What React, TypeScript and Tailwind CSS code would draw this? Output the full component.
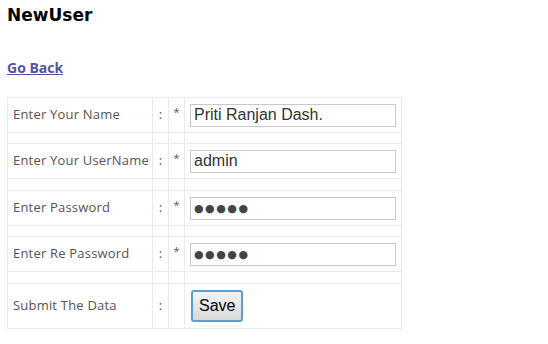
import React from 'react';

const rows = [
  { label: 'Enter Your Name', secret: false, value: 'Priti Ranjan Dash.', gap: 'h-[11px]' },
  { label: 'Enter Your UserName', secret: false, value: 'admin', gap: 'h-[12px]' },
  { label: 'Enter Password', secret: true, value: '●●●●●', gap: 'h-[11px]' },
  { label: 'Enter Re Password', secret: true, value: '●●●●●', gap: 'h-[12px]' },
];

const cell = 'border border-[#e6ebef] align-middle';

function Spacer({ h }: { h: string }) {
  return (
    <tr className={h}>
      <td className={cell} />
      <td className={cell} />
      <td className={cell} />
      <td className={cell} />
    </tr>
  );
}

export default function App() {
  return (
    <div className="bg-white w-[548px] h-[344px] px-[7px] pt-[3px] font-['DejaVu_Sans',sans-serif]">
      <h1 className="text-[17px] font-bold text-black leading-[24px]">NewUser</h1>
      <a
        href="#"
        className="block mt-[32px] w-fit text-[14px] font-bold text-[#5353a3] underline leading-[18px] font-['Open_Sans',sans-serif]"
      >
        Go Back
      </a>
      <table className="mt-[20px] border-collapse w-[395px] text-[13px] text-[#555] font-['Open_Sans',sans-serif]">
        <tbody>
          {rows.map((r) => (
            <React.Fragment key={r.label}>
              <tr className="h-[35px]">
                <td className={`${cell} w-[145px] pl-[5px] tracking-[0.2px]`}>{r.label}</td>
                <td className={`${cell} w-[16px] text-center`}>:</td>
                <td className={`${cell} w-[16px] text-center align-top pt-[6px] text-[11px]`}>*</td>
                <td className={`${cell} pl-[5px]`}>
                  <input
                    type="text"
                    readOnly
                    defaultValue={r.value}
                    className={`w-[206px] h-[23px] border border-[#c8c8c8] px-[3px] text-[#333] outline-none ${
                      r.secret
                        ? "text-[11px] tracking-[1.5px] text-[#444] font-['DejaVu_Sans',sans-serif]"
                        : "text-[16px] font-['Liberation_Sans',sans-serif]"
                    }`}
                  />
                </td>
              </tr>
              <Spacer h={r.gap} />
            </React.Fragment>
          ))}
          <tr className="h-[45px]">
            <td className={`${cell} pl-[5px] tracking-[0.2px]`}>Submit The Data</td>
            <td className={`${cell} text-center`}>:</td>
            <td className={cell} />
            <td className={`${cell} pl-[6px]`}>
              <button className="h-[32px] px-[6px] rounded-[3px] border-2 border-[#5d9fcc] bg-gradient-to-b from-[#f4f4f4] to-[#d9d9d9] text-[16px] text-black font-['Liberation_Sans',sans-serif]">
                Save
              </button>
            </td>
          </tr>
        </tbody>
      </table>
    </div>
  );
}
